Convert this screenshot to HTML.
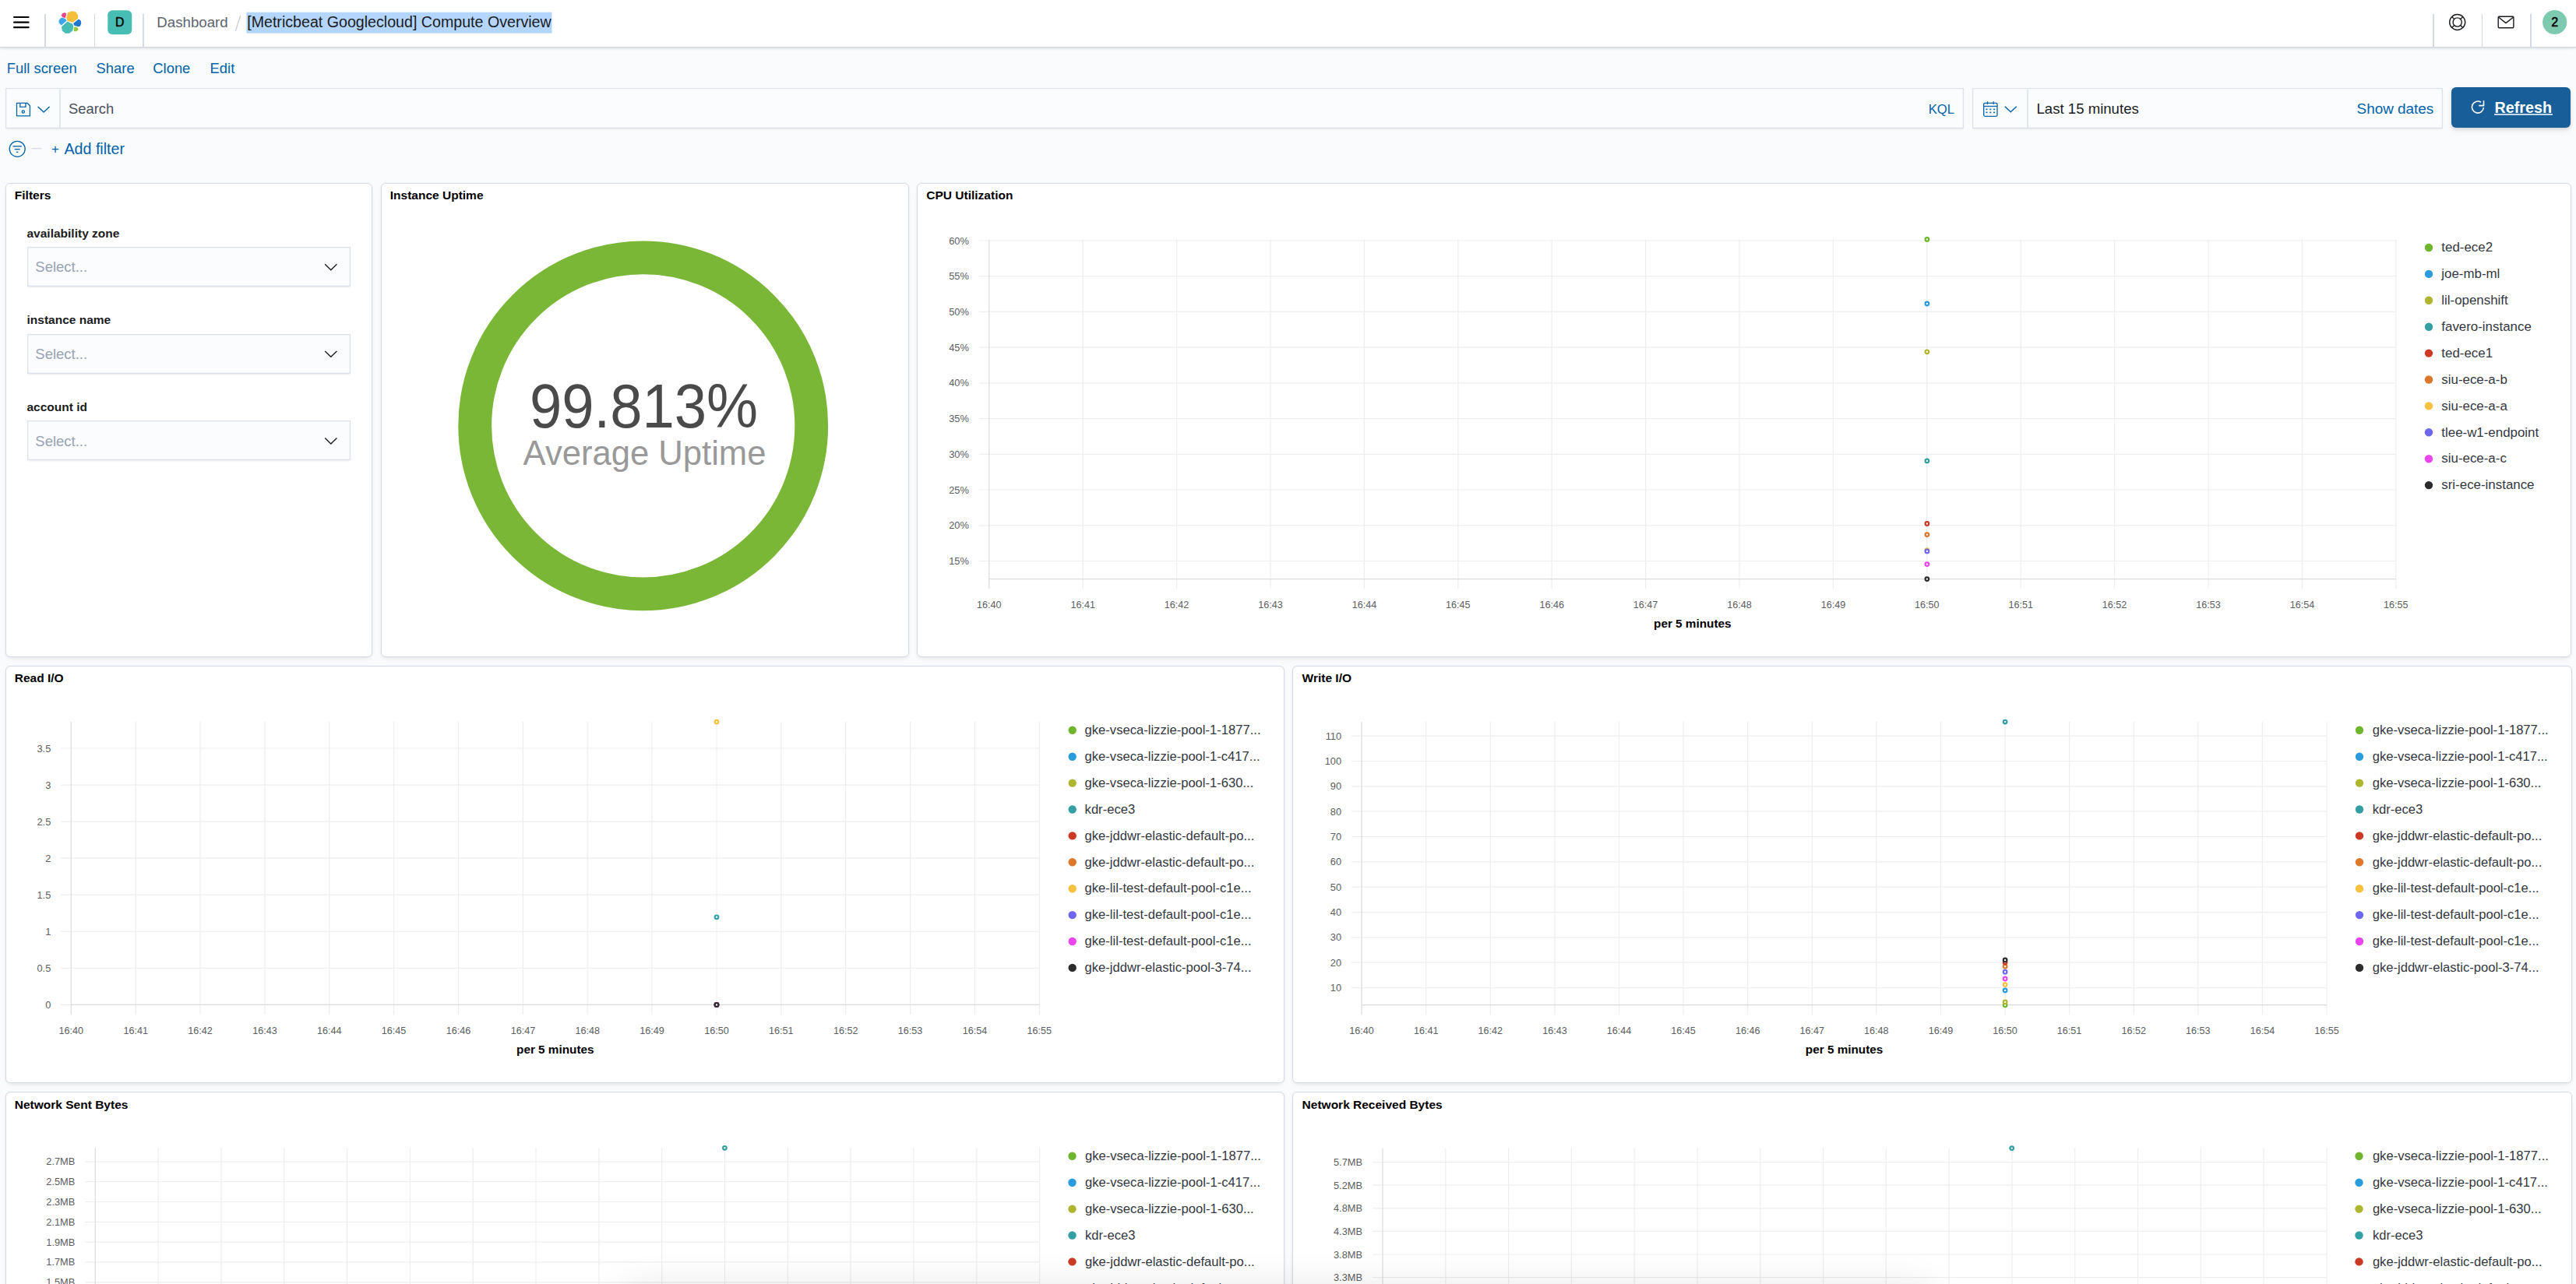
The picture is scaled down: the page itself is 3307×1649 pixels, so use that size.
<!DOCTYPE html>
<html><head><meta charset="utf-8"><title>[Metricbeat Googlecloud] Compute Overview - Kibana</title>
<style>
html,body{margin:0;padding:0;}
body{width:3307px;height:1649px;overflow:hidden;position:relative;background:#FAFBFD;font-family:"Liberation Sans", sans-serif;}
svg text{font-family:"Liberation Sans", sans-serif;}
</style></head><body>
<div style="position:absolute;left:0px;top:0px;width:3307px;height:60px;background:#fff;border-bottom:1px solid #D3DAE6;box-shadow:0 0.5px 0 rgba(200,208,222,.6),0 1.5px 3px rgba(0,0,0,.07),0 3px 6px -2px rgba(0,0,0,.04);"></div><div style="position:absolute;left:57.25px;top:18px;width:1.5px;height:42px;background:#D3DAE6;"></div><div style="position:absolute;left:120.75px;top:18px;width:1.5px;height:42px;background:#D3DAE6;"></div><div style="position:absolute;left:183.25px;top:18px;width:1.5px;height:42px;background:#D3DAE6;"></div><div style="position:absolute;left:3123.25px;top:18px;width:1.5px;height:42px;background:#D3DAE6;"></div><div style="position:absolute;left:3185.75px;top:18px;width:1.5px;height:42px;background:#D3DAE6;"></div><div style="position:absolute;left:3248.25px;top:18px;width:1.5px;height:42px;background:#D3DAE6;"></div><div style="position:absolute;left:7px;top:113px;width:2514px;height:52px;background:#FBFCFD;box-shadow:0 1px 2px -0.5px rgba(0,0,0,.06),0 3px 3px -2px rgba(0,0,0,.04),inset 0 0 0 1.3px #DCE1EA;"></div><div style="position:absolute;left:76.3px;top:114.5px;width:1.5px;height:49.19999999999999px;background:#E2E6ED;"></div><div style="position:absolute;left:2532px;top:113px;width:604px;height:52px;background:#FBFCFD;box-shadow:0 1px 2px -0.5px rgba(0,0,0,.06),0 3px 3px -2px rgba(0,0,0,.04),inset 0 0 0 1.3px #DCE1EA;"></div><div style="position:absolute;left:2602px;top:114.5px;width:1.5px;height:49.19999999999999px;background:#E2E6ED;"></div><div style="position:absolute;left:3147.2px;top:112.2px;width:152.80000000000018px;height:51.8px;background:#185F9A;border-radius:6px;box-shadow:0 2px 4px rgba(0,0,0,.12),0 4px 10px rgba(0,0,0,.06);"></div><div style="position:absolute;left:6.5px;top:234.5px;width:471.5px;height:609.3px;background:#fff;border:1px solid #D3DAE6;border-radius:6px;box-sizing:border-box;box-shadow:0 1px 4px -1px rgba(0,0,0,.07),0 3px 7px -2px rgba(0,0,0,.04),0 7px 12px -4px rgba(0,0,0,.03);"></div><div style="position:absolute;left:488.5px;top:234.5px;width:678.5px;height:609.3px;background:#fff;border:1px solid #D3DAE6;border-radius:6px;box-sizing:border-box;box-shadow:0 1px 4px -1px rgba(0,0,0,.07),0 3px 7px -2px rgba(0,0,0,.04),0 7px 12px -4px rgba(0,0,0,.03);"></div><div style="position:absolute;left:1177px;top:234.5px;width:2123.5px;height:609.3px;background:#fff;border:1px solid #D3DAE6;border-radius:6px;box-sizing:border-box;box-shadow:0 1px 4px -1px rgba(0,0,0,.07),0 3px 7px -2px rgba(0,0,0,.04),0 7px 12px -4px rgba(0,0,0,.03);"></div><div style="position:absolute;left:6.5px;top:854.7px;width:1642.5px;height:536.3px;background:#fff;border:1px solid #D3DAE6;border-radius:6px;box-sizing:border-box;box-shadow:0 1px 4px -1px rgba(0,0,0,.07),0 3px 7px -2px rgba(0,0,0,.04),0 7px 12px -4px rgba(0,0,0,.03);"></div><div style="position:absolute;left:1659.3px;top:854.7px;width:1642.3999999999999px;height:536.3px;background:#fff;border:1px solid #D3DAE6;border-radius:6px;box-sizing:border-box;box-shadow:0 1px 4px -1px rgba(0,0,0,.07),0 3px 7px -2px rgba(0,0,0,.04),0 7px 12px -4px rgba(0,0,0,.03);"></div><div style="position:absolute;left:6.5px;top:1402px;width:1642.5px;height:298px;background:#fff;border:1px solid #D3DAE6;border-radius:6px;box-sizing:border-box;box-shadow:0 1px 4px -1px rgba(0,0,0,.07),0 3px 7px -2px rgba(0,0,0,.04),0 7px 12px -4px rgba(0,0,0,.03);"></div><div style="position:absolute;left:1659.3px;top:1402px;width:1642.3999999999999px;height:298px;background:#fff;border:1px solid #D3DAE6;border-radius:6px;box-sizing:border-box;box-shadow:0 1px 4px -1px rgba(0,0,0,.07),0 3px 7px -2px rgba(0,0,0,.04),0 7px 12px -4px rgba(0,0,0,.03);"></div><div style="position:absolute;left:34.5px;top:317.2px;width:415.2px;height:51.0px;background:#FBFCFD;box-shadow:0 1px 2px -0.5px rgba(0,0,0,.06),0 3px 3px -2px rgba(0,0,0,.04),inset 0 0 0 1.3px #DCE1EA;"></div><div style="position:absolute;left:34.5px;top:428.79999999999995px;width:415.2px;height:51.0px;background:#FBFCFD;box-shadow:0 1px 2px -0.5px rgba(0,0,0,.06),0 3px 3px -2px rgba(0,0,0,.04),inset 0 0 0 1.3px #DCE1EA;"></div><div style="position:absolute;left:34.5px;top:540.4px;width:415.2px;height:51.0px;background:#FBFCFD;box-shadow:0 1px 2px -0.5px rgba(0,0,0,.06),0 3px 3px -2px rgba(0,0,0,.04),inset 0 0 0 1.3px #DCE1EA;"></div>
<svg width="3307" height="1649" viewBox="0 0 3307 1649" style="position:absolute;left:0;top:0;">
<rect x="17" y="20.9" width="20.6" height="2.2" rx="1" fill="#000"/><rect x="17" y="27.599999999999998" width="20.6" height="2.2" rx="1" fill="#000"/><rect x="17" y="34.1" width="20.6" height="2.2" rx="1" fill="#000"/><g stroke-linejoin="round" stroke-width="1.1">
<polygon points="79.41,19.76 80.50,17.63 83.02,16.86 84.64,17.63 84.20,19.91 83.46,22.43 80.80,21.83" fill="#E8488B" stroke="#E8488B"/>
<polygon points="86.12,21.24 87.60,16.66 92.19,14.67 96.63,15.47 99.59,19.47 99.59,23.31 93.37,28.34 87.01,26.42 85.83,23.31" fill="#F5BF3B" stroke="#F5BF3B"/>
<polygon points="76.07,26.57 77.84,24.05 79.76,23.37 83.76,24.64 84.79,26.57 78.73,31.89 76.21,29.23" fill="#3EA5EE" stroke="#3EA5EE"/>
<polygon points="79.76,34.26 86.57,28.34 92.93,31.15 93.67,34.26 92.84,38.85 88.93,42.25 84.20,42.25 80.21,39.14" fill="#47BDB3" stroke="#47BDB3"/>
<polygon points="94.85,30.12 101.01,25.24 103.28,27.01 103.73,30.12 102.40,33.22 100.47,33.67 95.59,32.13" fill="#1F77CF" stroke="#1F77CF"/>
<polygon points="95.38,35.38 97.22,35.09 99.59,36.18 99.88,38.05 98.25,39.59 95.38,39.59" fill="#93C83E" stroke="#93C83E"/>
</g><rect x="138.3" y="13.3" width="31" height="31" rx="6" fill="#48BDB3"/><text x="153.8" y="33.9" font-size="15.8" fill="#000" font-weight="400" text-anchor="middle" stroke="#000" stroke-width="0.45">D</text><text x="201.3" y="35.4" font-size="18.7" fill="#5E646F" font-weight="400" text-anchor="start" >Dashboard</text><line x1="308.6" y1="20.2" x2="302.4" y2="39.8" stroke="#C8CED8" stroke-width="1.3" /><rect x="316.5" y="15.7" width="392" height="27" fill="#B4D5FE"/><text x="317.2" y="35.4" font-size="19.6" fill="#1A1C21" font-weight="400" text-anchor="start" textLength="390.5" lengthAdjust="spacingAndGlyphs">[Metricbeat Googlecloud] Compute Overview</text><g fill="none" stroke="#1A1C21" stroke-width="1.4">
<circle cx="3154.7" cy="28.5" r="10"/><circle cx="3154.7" cy="28.5" r="5.6"/>
<line x1="3147.6" y1="21.4" x2="3150.7" y2="24.5"/><line x1="3161.8" y1="21.4" x2="3158.7" y2="24.5"/>
<line x1="3147.6" y1="35.6" x2="3150.7" y2="32.5"/><line x1="3161.8" y1="35.6" x2="3158.7" y2="32.5"/>
</g><g fill="none" stroke="#1A1C21" stroke-width="1.4" stroke-linejoin="round">
<rect x="3207.2" y="21.3" width="19.7" height="14.4" rx="1.2"/>
<path d="M3207.8 22.2 L3217 29.6 L3226.3 22.2"/>
</g><circle cx="3279.7" cy="28.5" r="15.6" fill="#7DCAB0"/><text x="3279.7" y="34.2" font-size="16" fill="#000" font-weight="400" text-anchor="middle" stroke="#000" stroke-width="0.5">2</text><text x="8.7" y="93.5" font-size="18.4" fill="#0062A8" font-weight="400" text-anchor="start" >Full screen</text><text x="123.6" y="93.5" font-size="18.4" fill="#0062A8" font-weight="400" text-anchor="start" >Share</text><text x="196.3" y="93.5" font-size="18.4" fill="#0062A8" font-weight="400" text-anchor="start" >Clone</text><text x="269.6" y="93.5" font-size="18.4" fill="#0062A8" font-weight="400" text-anchor="start" >Edit</text><g fill="none" stroke="#0062A8" stroke-width="1.3" stroke-linejoin="round">
<path d="M21.5 132.3 H35 L38.4 135.7 V148.8 H21.5 Z"/>
<path d="M25.8 132.3 V137.3 H33 V132.3"/>
<circle cx="29.8" cy="143.5" r="1.6"/>
</g><path d="M48.6 137.1 L56.1 144.1 L63.6 137.1" fill="none" stroke="#0062A8" stroke-width="1.4"/><text x="88" y="145.7" font-size="18.4" fill="#4A505C" font-weight="400" text-anchor="start" >Search</text><text x="2509" y="146" font-size="16.6" fill="#0062A8" font-weight="400" text-anchor="end" >KQL</text><g fill="none" stroke="#0062A8" stroke-width="1.3">
<rect x="2546.7" y="132.3" width="17.3" height="17" rx="1.5"/>
<line x1="2546.7" y1="136.5" x2="2564" y2="136.5"/>
<line x1="2551.5" y1="130.3" x2="2551.5" y2="134"/><line x1="2559.2" y1="130.3" x2="2559.2" y2="134"/>
</g>
<g fill="#0062A8">
<rect x="2549.5" y="139.6" width="2" height="1.6"/><rect x="2554.3" y="139.6" width="2" height="1.6"/><rect x="2559.1" y="139.6" width="2" height="1.6"/>
<rect x="2549.5" y="143.6" width="2" height="1.6"/><rect x="2554.3" y="143.6" width="2" height="1.6"/><rect x="2559.1" y="143.6" width="2" height="1.6"/>
</g><path d="M2573.8 136.8 L2581.3 143.8 L2588.8 136.8" fill="none" stroke="#0062A8" stroke-width="1.4"/><text x="2614.5" y="146" font-size="18.6" fill="#1A1C21" font-weight="400" text-anchor="start" >Last 15 minutes</text><text x="3124.3" y="146" font-size="18.9" fill="#0062A8" font-weight="400" text-anchor="end" >Show dates</text><g fill="none" stroke="#fff" stroke-width="1.6">
<path d="M3184.9 131.2 A7.5 7.5 0 1 0 3188.4 138"/>
<path d="M3188.5 129.2 V135.6 H3182.3"/>
</g><text x="3202.5" y="144.8" font-size="21" fill="#fff" font-weight="700" text-anchor="start" textLength="73.5" lengthAdjust="spacingAndGlyphs">Refresh</text><line x1="3202" y1="147" x2="3277" y2="147" stroke="#fff" stroke-width="1.7" /><g fill="none" stroke="#0062A8" stroke-width="1.3">
<circle cx="22.2" cy="191.3" r="10"/>
<line x1="16.5" y1="187.9" x2="27.9" y2="187.9"/>
<line x1="18.7" y1="191.7" x2="25.7" y2="191.7"/>
<line x1="21" y1="195.4" x2="23.4" y2="195.4"/>
</g><line x1="40.4" y1="190.7" x2="53.4" y2="190.7" stroke="#D3DAE6" stroke-width="1.3" /><text x="70.9" y="197" font-size="17" fill="#0062A8" font-weight="400" text-anchor="middle" >+</text><text x="82.5" y="198" font-size="19.4" fill="#0062A8" font-weight="400" text-anchor="start" textLength="77.5" lengthAdjust="spacingAndGlyphs">Add filter</text><text x="18.8" y="256.0" font-size="15.5" fill="#000" font-weight="700" text-anchor="start" >Filters</text><text x="500.8" y="256.0" font-size="15.5" fill="#000" font-weight="700" text-anchor="start" >Instance Uptime</text><text x="1189.3" y="256.0" font-size="15.5" fill="#000" font-weight="700" text-anchor="start" >CPU Utilization</text><text x="18.8" y="876.2" font-size="15.5" fill="#000" font-weight="700" text-anchor="start" >Read I/O</text><text x="1671.6" y="876.2" font-size="15.5" fill="#000" font-weight="700" text-anchor="start" >Write I/O</text><text x="18.8" y="1423.5" font-size="15.5" fill="#000" font-weight="700" text-anchor="start" >Network Sent Bytes</text><text x="1671.6" y="1423.5" font-size="15.5" fill="#000" font-weight="700" text-anchor="start" >Network Received Bytes</text><text x="34.5" y="304.8" font-size="15.5" fill="#1A1C21" font-weight="700" text-anchor="start" >availability zone</text><text x="45.3" y="349.3" font-size="18.5" fill="#98A2B3" font-weight="400" text-anchor="start" >Select...</text><path d="M417.2 339.3 L424.8 346.7 L432.4 339.3" fill="none" stroke="#1A1C21" stroke-width="1.4"/><text x="34.5" y="416.4" font-size="15.5" fill="#1A1C21" font-weight="700" text-anchor="start" >instance name</text><text x="45.3" y="460.9" font-size="18.5" fill="#98A2B3" font-weight="400" text-anchor="start" >Select...</text><path d="M417.2 450.9 L424.8 458.29999999999995 L432.4 450.9" fill="none" stroke="#1A1C21" stroke-width="1.4"/><text x="34.5" y="528.0" font-size="15.5" fill="#1A1C21" font-weight="700" text-anchor="start" >account id</text><text x="45.3" y="572.5" font-size="18.5" fill="#98A2B3" font-weight="400" text-anchor="start" >Select...</text><path d="M417.2 562.5 L424.8 569.9 L432.4 562.5" fill="none" stroke="#1A1C21" stroke-width="1.4"/><circle cx="825.7" cy="546.8" r="216" fill="none" stroke="#7AB736" stroke-width="42.8"/><text x="826.5" y="548.8" font-size="80" fill="#4A4A4A" font-weight="400" text-anchor="middle" textLength="293" lengthAdjust="spacingAndGlyphs">99.813%</text><text x="827.5" y="597.2" font-size="43.6" fill="#999999" font-weight="400" text-anchor="middle" >Average Uptime</text><line x1="1256.8" y1="309.0" x2="3075.8" y2="309.0" stroke="#EEEEEE" stroke-width="1.2"/><line x1="1256.8" y1="354.7" x2="3075.8" y2="354.7" stroke="#EEEEEE" stroke-width="1.2"/><line x1="1256.8" y1="400.4" x2="3075.8" y2="400.4" stroke="#EEEEEE" stroke-width="1.2"/><line x1="1256.8" y1="446.2" x2="3075.8" y2="446.2" stroke="#EEEEEE" stroke-width="1.2"/><line x1="1256.8" y1="491.9" x2="3075.8" y2="491.9" stroke="#EEEEEE" stroke-width="1.2"/><line x1="1256.8" y1="537.6" x2="3075.8" y2="537.6" stroke="#EEEEEE" stroke-width="1.2"/><line x1="1256.8" y1="583.3" x2="3075.8" y2="583.3" stroke="#EEEEEE" stroke-width="1.2"/><line x1="1256.8" y1="629.0" x2="3075.8" y2="629.0" stroke="#EEEEEE" stroke-width="1.2"/><line x1="1256.8" y1="674.8" x2="3075.8" y2="674.8" stroke="#EEEEEE" stroke-width="1.2"/><line x1="1256.8" y1="720.5" x2="3075.8" y2="720.5" stroke="#EEEEEE" stroke-width="1.2"/><line x1="1269.8" y1="307.6" x2="1269.8" y2="756.3" stroke="#DCDCDC" stroke-width="1.2"/><line x1="1390.2" y1="307.6" x2="1390.2" y2="756.3" stroke="#EEEEEE" stroke-width="1.2"/><line x1="1510.6" y1="307.6" x2="1510.6" y2="756.3" stroke="#EEEEEE" stroke-width="1.2"/><line x1="1631.0" y1="307.6" x2="1631.0" y2="756.3" stroke="#EEEEEE" stroke-width="1.2"/><line x1="1751.4" y1="307.6" x2="1751.4" y2="756.3" stroke="#EEEEEE" stroke-width="1.2"/><line x1="1871.8" y1="307.6" x2="1871.8" y2="756.3" stroke="#EEEEEE" stroke-width="1.2"/><line x1="1992.2" y1="307.6" x2="1992.2" y2="756.3" stroke="#EEEEEE" stroke-width="1.2"/><line x1="2112.6" y1="307.6" x2="2112.6" y2="756.3" stroke="#EEEEEE" stroke-width="1.2"/><line x1="2233.0" y1="307.6" x2="2233.0" y2="756.3" stroke="#EEEEEE" stroke-width="1.2"/><line x1="2353.4" y1="307.6" x2="2353.4" y2="756.3" stroke="#EEEEEE" stroke-width="1.2"/><line x1="2473.8" y1="307.6" x2="2473.8" y2="756.3" stroke="#EEEEEE" stroke-width="1.2"/><line x1="2594.2" y1="307.6" x2="2594.2" y2="756.3" stroke="#EEEEEE" stroke-width="1.2"/><line x1="2714.6" y1="307.6" x2="2714.6" y2="756.3" stroke="#EEEEEE" stroke-width="1.2"/><line x1="2835.0" y1="307.6" x2="2835.0" y2="756.3" stroke="#EEEEEE" stroke-width="1.2"/><line x1="2955.4" y1="307.6" x2="2955.4" y2="756.3" stroke="#EEEEEE" stroke-width="1.2"/><line x1="3075.8" y1="307.6" x2="3075.8" y2="756.3" stroke="#EEEEEE" stroke-width="1.2"/><line x1="1269.8" y1="743.6" x2="3075.8" y2="743.6" stroke="#DCDCDC" stroke-width="1.3"/><text x="1243.8" y="313.5" font-size="12.8" fill="#5C5D62" font-weight="400" text-anchor="end" >60%</text><text x="1243.8" y="359.2" font-size="12.8" fill="#5C5D62" font-weight="400" text-anchor="end" >55%</text><text x="1243.8" y="404.9" font-size="12.8" fill="#5C5D62" font-weight="400" text-anchor="end" >50%</text><text x="1243.8" y="450.7" font-size="12.8" fill="#5C5D62" font-weight="400" text-anchor="end" >45%</text><text x="1243.8" y="496.4" font-size="12.8" fill="#5C5D62" font-weight="400" text-anchor="end" >40%</text><text x="1243.8" y="542.1" font-size="12.8" fill="#5C5D62" font-weight="400" text-anchor="end" >35%</text><text x="1243.8" y="587.8" font-size="12.8" fill="#5C5D62" font-weight="400" text-anchor="end" >30%</text><text x="1243.8" y="633.5" font-size="12.8" fill="#5C5D62" font-weight="400" text-anchor="end" >25%</text><text x="1243.8" y="679.3" font-size="12.8" fill="#5C5D62" font-weight="400" text-anchor="end" >20%</text><text x="1243.8" y="725.0" font-size="12.8" fill="#5C5D62" font-weight="400" text-anchor="end" >15%</text><text x="1269.8" y="780.8" font-size="12.6" fill="#5C5D62" font-weight="400" text-anchor="middle" >16:40</text><text x="1390.2" y="780.8" font-size="12.6" fill="#5C5D62" font-weight="400" text-anchor="middle" >16:41</text><text x="1510.6" y="780.8" font-size="12.6" fill="#5C5D62" font-weight="400" text-anchor="middle" >16:42</text><text x="1631.0" y="780.8" font-size="12.6" fill="#5C5D62" font-weight="400" text-anchor="middle" >16:43</text><text x="1751.4" y="780.8" font-size="12.6" fill="#5C5D62" font-weight="400" text-anchor="middle" >16:44</text><text x="1871.8" y="780.8" font-size="12.6" fill="#5C5D62" font-weight="400" text-anchor="middle" >16:45</text><text x="1992.2" y="780.8" font-size="12.6" fill="#5C5D62" font-weight="400" text-anchor="middle" >16:46</text><text x="2112.6" y="780.8" font-size="12.6" fill="#5C5D62" font-weight="400" text-anchor="middle" >16:47</text><text x="2233.0" y="780.8" font-size="12.6" fill="#5C5D62" font-weight="400" text-anchor="middle" >16:48</text><text x="2353.4" y="780.8" font-size="12.6" fill="#5C5D62" font-weight="400" text-anchor="middle" >16:49</text><text x="2473.8" y="780.8" font-size="12.6" fill="#5C5D62" font-weight="400" text-anchor="middle" >16:50</text><text x="2594.2" y="780.8" font-size="12.6" fill="#5C5D62" font-weight="400" text-anchor="middle" >16:51</text><text x="2714.6" y="780.8" font-size="12.6" fill="#5C5D62" font-weight="400" text-anchor="middle" >16:52</text><text x="2835.0" y="780.8" font-size="12.6" fill="#5C5D62" font-weight="400" text-anchor="middle" >16:53</text><text x="2955.4" y="780.8" font-size="12.6" fill="#5C5D62" font-weight="400" text-anchor="middle" >16:54</text><text x="3075.8" y="780.8" font-size="12.6" fill="#5C5D62" font-weight="400" text-anchor="middle" >16:55</text><text x="2172.8" y="806.1" font-size="15.3" fill="#000" font-weight="700" text-anchor="middle" >per 5 minutes</text><circle cx="2473.9" cy="307.4" r="2.3" fill="#fff" stroke="#6FB62E" stroke-width="2.2"/><circle cx="2473.9" cy="390.0" r="2.3" fill="#fff" stroke="#2A9CDD" stroke-width="2.2"/><circle cx="2473.9" cy="451.8" r="2.3" fill="#fff" stroke="#ADB62E" stroke-width="2.2"/><circle cx="2473.9" cy="591.9" r="2.3" fill="#fff" stroke="#339FA2" stroke-width="2.2"/><circle cx="2473.9" cy="672.5" r="2.3" fill="#fff" stroke="#CC3A26" stroke-width="2.2"/><circle cx="2473.9" cy="686.6" r="2.3" fill="#fff" stroke="#DD772A" stroke-width="2.2"/><circle cx="2473.9" cy="706.6" r="2.3" fill="#fff" stroke="#F7C23F" stroke-width="2.2"/><circle cx="2473.9" cy="707.9" r="2.3" fill="#fff" stroke="#6E66F0" stroke-width="2.2"/><circle cx="2473.9" cy="724.6" r="2.3" fill="#fff" stroke="#EB45EE" stroke-width="2.2"/><circle cx="2473.9" cy="743.6" r="2.3" fill="#fff" stroke="#2B2B2B" stroke-width="2.2"/><circle cx="3118.0" cy="318.0" r="5.2" fill="#6FB62E"/><text x="3134.3" y="323.2" font-size="16.9" fill="#343741" font-weight="400" text-anchor="start" >ted-ece2</text><circle cx="3118.0" cy="351.9" r="5.2" fill="#2A9CDD"/><text x="3134.3" y="357.1" font-size="16.9" fill="#343741" font-weight="400" text-anchor="start" >joe-mb-ml</text><circle cx="3118.0" cy="385.8" r="5.2" fill="#ADB62E"/><text x="3134.3" y="391.0" font-size="16.9" fill="#343741" font-weight="400" text-anchor="start" >lil-openshift</text><circle cx="3118.0" cy="419.7" r="5.2" fill="#339FA2"/><text x="3134.3" y="424.9" font-size="16.9" fill="#343741" font-weight="400" text-anchor="start" >favero-instance</text><circle cx="3118.0" cy="453.6" r="5.2" fill="#CC3A26"/><text x="3134.3" y="458.8" font-size="16.9" fill="#343741" font-weight="400" text-anchor="start" >ted-ece1</text><circle cx="3118.0" cy="487.5" r="5.2" fill="#DD772A"/><text x="3134.3" y="492.7" font-size="16.9" fill="#343741" font-weight="400" text-anchor="start" >siu-ece-a-b</text><circle cx="3118.0" cy="521.4" r="5.2" fill="#F7C23F"/><text x="3134.3" y="526.6" font-size="16.9" fill="#343741" font-weight="400" text-anchor="start" >siu-ece-a-a</text><circle cx="3118.0" cy="555.3" r="5.2" fill="#6E66F0"/><text x="3134.3" y="560.5" font-size="16.9" fill="#343741" font-weight="400" text-anchor="start" >tlee-w1-endpoint</text><circle cx="3118.0" cy="589.2" r="5.2" fill="#EB45EE"/><text x="3134.3" y="594.4" font-size="16.9" fill="#343741" font-weight="400" text-anchor="start" >siu-ece-a-c</text><circle cx="3118.0" cy="623.1" r="5.2" fill="#2B2B2B"/><text x="3134.3" y="628.3" font-size="16.9" fill="#343741" font-weight="400" text-anchor="start" >sri-ece-instance</text><line x1="78.3" y1="961.0" x2="1334.3" y2="961.0" stroke="#EEEEEE" stroke-width="1.2"/><line x1="78.3" y1="1008.1" x2="1334.3" y2="1008.1" stroke="#EEEEEE" stroke-width="1.2"/><line x1="78.3" y1="1055.1" x2="1334.3" y2="1055.1" stroke="#EEEEEE" stroke-width="1.2"/><line x1="78.3" y1="1102.2" x2="1334.3" y2="1102.2" stroke="#EEEEEE" stroke-width="1.2"/><line x1="78.3" y1="1149.2" x2="1334.3" y2="1149.2" stroke="#EEEEEE" stroke-width="1.2"/><line x1="78.3" y1="1196.3" x2="1334.3" y2="1196.3" stroke="#EEEEEE" stroke-width="1.2"/><line x1="78.3" y1="1243.4" x2="1334.3" y2="1243.4" stroke="#EEEEEE" stroke-width="1.2"/><line x1="78.3" y1="1290.4" x2="1334.3" y2="1290.4" stroke="#EEEEEE" stroke-width="1.2"/><line x1="91.3" y1="927.1" x2="91.3" y2="1303.1" stroke="#DCDCDC" stroke-width="1.2"/><line x1="174.2" y1="927.1" x2="174.2" y2="1303.1" stroke="#EEEEEE" stroke-width="1.2"/><line x1="257.0" y1="927.1" x2="257.0" y2="1303.1" stroke="#EEEEEE" stroke-width="1.2"/><line x1="339.9" y1="927.1" x2="339.9" y2="1303.1" stroke="#EEEEEE" stroke-width="1.2"/><line x1="422.8" y1="927.1" x2="422.8" y2="1303.1" stroke="#EEEEEE" stroke-width="1.2"/><line x1="505.6" y1="927.1" x2="505.6" y2="1303.1" stroke="#EEEEEE" stroke-width="1.2"/><line x1="588.5" y1="927.1" x2="588.5" y2="1303.1" stroke="#EEEEEE" stroke-width="1.2"/><line x1="671.4" y1="927.1" x2="671.4" y2="1303.1" stroke="#EEEEEE" stroke-width="1.2"/><line x1="754.2" y1="927.1" x2="754.2" y2="1303.1" stroke="#EEEEEE" stroke-width="1.2"/><line x1="837.1" y1="927.1" x2="837.1" y2="1303.1" stroke="#EEEEEE" stroke-width="1.2"/><line x1="920.0" y1="927.1" x2="920.0" y2="1303.1" stroke="#EEEEEE" stroke-width="1.2"/><line x1="1002.8" y1="927.1" x2="1002.8" y2="1303.1" stroke="#EEEEEE" stroke-width="1.2"/><line x1="1085.7" y1="927.1" x2="1085.7" y2="1303.1" stroke="#EEEEEE" stroke-width="1.2"/><line x1="1168.6" y1="927.1" x2="1168.6" y2="1303.1" stroke="#EEEEEE" stroke-width="1.2"/><line x1="1251.4" y1="927.1" x2="1251.4" y2="1303.1" stroke="#EEEEEE" stroke-width="1.2"/><line x1="1334.3" y1="927.1" x2="1334.3" y2="1303.1" stroke="#EEEEEE" stroke-width="1.2"/><line x1="91.3" y1="1290.4" x2="1334.3" y2="1290.4" stroke="#DCDCDC" stroke-width="1.3"/><text x="65.3" y="965.5" font-size="12.8" fill="#5C5D62" font-weight="400" text-anchor="end" >3.5</text><text x="65.3" y="1012.6" font-size="12.8" fill="#5C5D62" font-weight="400" text-anchor="end" >3</text><text x="65.3" y="1059.6" font-size="12.8" fill="#5C5D62" font-weight="400" text-anchor="end" >2.5</text><text x="65.3" y="1106.7" font-size="12.8" fill="#5C5D62" font-weight="400" text-anchor="end" >2</text><text x="65.3" y="1153.7" font-size="12.8" fill="#5C5D62" font-weight="400" text-anchor="end" >1.5</text><text x="65.3" y="1200.8" font-size="12.8" fill="#5C5D62" font-weight="400" text-anchor="end" >1</text><text x="65.3" y="1247.9" font-size="12.8" fill="#5C5D62" font-weight="400" text-anchor="end" >0.5</text><text x="65.3" y="1294.9" font-size="12.8" fill="#5C5D62" font-weight="400" text-anchor="end" >0</text><text x="91.3" y="1327.6" font-size="12.6" fill="#5C5D62" font-weight="400" text-anchor="middle" >16:40</text><text x="174.2" y="1327.6" font-size="12.6" fill="#5C5D62" font-weight="400" text-anchor="middle" >16:41</text><text x="257.0" y="1327.6" font-size="12.6" fill="#5C5D62" font-weight="400" text-anchor="middle" >16:42</text><text x="339.9" y="1327.6" font-size="12.6" fill="#5C5D62" font-weight="400" text-anchor="middle" >16:43</text><text x="422.8" y="1327.6" font-size="12.6" fill="#5C5D62" font-weight="400" text-anchor="middle" >16:44</text><text x="505.6" y="1327.6" font-size="12.6" fill="#5C5D62" font-weight="400" text-anchor="middle" >16:45</text><text x="588.5" y="1327.6" font-size="12.6" fill="#5C5D62" font-weight="400" text-anchor="middle" >16:46</text><text x="671.4" y="1327.6" font-size="12.6" fill="#5C5D62" font-weight="400" text-anchor="middle" >16:47</text><text x="754.2" y="1327.6" font-size="12.6" fill="#5C5D62" font-weight="400" text-anchor="middle" >16:48</text><text x="837.1" y="1327.6" font-size="12.6" fill="#5C5D62" font-weight="400" text-anchor="middle" >16:49</text><text x="920.0" y="1327.6" font-size="12.6" fill="#5C5D62" font-weight="400" text-anchor="middle" >16:50</text><text x="1002.8" y="1327.6" font-size="12.6" fill="#5C5D62" font-weight="400" text-anchor="middle" >16:51</text><text x="1085.7" y="1327.6" font-size="12.6" fill="#5C5D62" font-weight="400" text-anchor="middle" >16:52</text><text x="1168.6" y="1327.6" font-size="12.6" fill="#5C5D62" font-weight="400" text-anchor="middle" >16:53</text><text x="1251.4" y="1327.6" font-size="12.6" fill="#5C5D62" font-weight="400" text-anchor="middle" >16:54</text><text x="1334.3" y="1327.6" font-size="12.6" fill="#5C5D62" font-weight="400" text-anchor="middle" >16:55</text><text x="712.8" y="1352.9" font-size="15.3" fill="#000" font-weight="700" text-anchor="middle" >per 5 minutes</text><circle cx="920.0" cy="1290.4" r="2.3" fill="#fff" stroke="#6FB62E" stroke-width="2.2"/><circle cx="920.0" cy="1290.4" r="2.3" fill="#fff" stroke="#2A9CDD" stroke-width="2.2"/><circle cx="920.0" cy="1290.4" r="2.3" fill="#fff" stroke="#ADB62E" stroke-width="2.2"/><circle cx="920.0" cy="1290.4" r="2.3" fill="#fff" stroke="#CC3A26" stroke-width="2.2"/><circle cx="920.0" cy="1290.4" r="2.3" fill="#fff" stroke="#DD772A" stroke-width="2.2"/><circle cx="920.0" cy="1290.4" r="2.3" fill="#fff" stroke="#6E66F0" stroke-width="2.2"/><circle cx="920.0" cy="1290.4" r="2.3" fill="#fff" stroke="#EB45EE" stroke-width="2.2"/><circle cx="920.0" cy="1290.4" r="2.3" fill="#fff" stroke="#2B2B2B" stroke-width="2.2"/><circle cx="920.0" cy="1177.8" r="2.3" fill="#fff" stroke="#339FA2" stroke-width="2.2"/><circle cx="920.0" cy="927.1" r="2.3" fill="#fff" stroke="#F7C23F" stroke-width="2.2"/><circle cx="1376.7" cy="937.8" r="5.2" fill="#6FB62E"/><text x="1392.6" y="943.0" font-size="16.6" fill="#343741" font-weight="400" text-anchor="start" >gke-vseca-lizzie-pool-1-1877...</text><circle cx="1376.7" cy="971.7" r="5.2" fill="#2A9CDD"/><text x="1392.6" y="976.9" font-size="16.6" fill="#343741" font-weight="400" text-anchor="start" >gke-vseca-lizzie-pool-1-c417...</text><circle cx="1376.7" cy="1005.6" r="5.2" fill="#ADB62E"/><text x="1392.6" y="1010.8" font-size="16.6" fill="#343741" font-weight="400" text-anchor="start" >gke-vseca-lizzie-pool-1-630...</text><circle cx="1376.7" cy="1039.5" r="5.2" fill="#339FA2"/><text x="1392.6" y="1044.7" font-size="16.6" fill="#343741" font-weight="400" text-anchor="start" >kdr-ece3</text><circle cx="1376.7" cy="1073.4" r="5.2" fill="#CC3A26"/><text x="1392.6" y="1078.6" font-size="16.6" fill="#343741" font-weight="400" text-anchor="start" >gke-jddwr-elastic-default-po...</text><circle cx="1376.7" cy="1107.3" r="5.2" fill="#DD772A"/><text x="1392.6" y="1112.5" font-size="16.6" fill="#343741" font-weight="400" text-anchor="start" >gke-jddwr-elastic-default-po...</text><circle cx="1376.7" cy="1141.2" r="5.2" fill="#F7C23F"/><text x="1392.6" y="1146.4" font-size="16.6" fill="#343741" font-weight="400" text-anchor="start" >gke-lil-test-default-pool-c1e...</text><circle cx="1376.7" cy="1175.1" r="5.2" fill="#6E66F0"/><text x="1392.6" y="1180.3" font-size="16.6" fill="#343741" font-weight="400" text-anchor="start" >gke-lil-test-default-pool-c1e...</text><circle cx="1376.7" cy="1209.0" r="5.2" fill="#EB45EE"/><text x="1392.6" y="1214.2" font-size="16.6" fill="#343741" font-weight="400" text-anchor="start" >gke-lil-test-default-pool-c1e...</text><circle cx="1376.7" cy="1242.9" r="5.2" fill="#2B2B2B"/><text x="1392.6" y="1248.1" font-size="16.6" fill="#343741" font-weight="400" text-anchor="start" >gke-jddwr-elastic-pool-3-74...</text><line x1="1735.1" y1="945.1" x2="2987.0" y2="945.1" stroke="#EEEEEE" stroke-width="1.2"/><line x1="1735.1" y1="977.5" x2="2987.0" y2="977.5" stroke="#EEEEEE" stroke-width="1.2"/><line x1="1735.1" y1="1009.8" x2="2987.0" y2="1009.8" stroke="#EEEEEE" stroke-width="1.2"/><line x1="1735.1" y1="1042.2" x2="2987.0" y2="1042.2" stroke="#EEEEEE" stroke-width="1.2"/><line x1="1735.1" y1="1074.5" x2="2987.0" y2="1074.5" stroke="#EEEEEE" stroke-width="1.2"/><line x1="1735.1" y1="1106.8" x2="2987.0" y2="1106.8" stroke="#EEEEEE" stroke-width="1.2"/><line x1="1735.1" y1="1139.2" x2="2987.0" y2="1139.2" stroke="#EEEEEE" stroke-width="1.2"/><line x1="1735.1" y1="1171.5" x2="2987.0" y2="1171.5" stroke="#EEEEEE" stroke-width="1.2"/><line x1="1735.1" y1="1203.9" x2="2987.0" y2="1203.9" stroke="#EEEEEE" stroke-width="1.2"/><line x1="1735.1" y1="1236.2" x2="2987.0" y2="1236.2" stroke="#EEEEEE" stroke-width="1.2"/><line x1="1735.1" y1="1268.6" x2="2987.0" y2="1268.6" stroke="#EEEEEE" stroke-width="1.2"/><line x1="1748.1" y1="927.1" x2="1748.1" y2="1303.3" stroke="#DCDCDC" stroke-width="1.2"/><line x1="1830.7" y1="927.1" x2="1830.7" y2="1303.3" stroke="#EEEEEE" stroke-width="1.2"/><line x1="1913.3" y1="927.1" x2="1913.3" y2="1303.3" stroke="#EEEEEE" stroke-width="1.2"/><line x1="1995.9" y1="927.1" x2="1995.9" y2="1303.3" stroke="#EEEEEE" stroke-width="1.2"/><line x1="2078.5" y1="927.1" x2="2078.5" y2="1303.3" stroke="#EEEEEE" stroke-width="1.2"/><line x1="2161.1" y1="927.1" x2="2161.1" y2="1303.3" stroke="#EEEEEE" stroke-width="1.2"/><line x1="2243.7" y1="927.1" x2="2243.7" y2="1303.3" stroke="#EEEEEE" stroke-width="1.2"/><line x1="2326.3" y1="927.1" x2="2326.3" y2="1303.3" stroke="#EEEEEE" stroke-width="1.2"/><line x1="2408.8" y1="927.1" x2="2408.8" y2="1303.3" stroke="#EEEEEE" stroke-width="1.2"/><line x1="2491.4" y1="927.1" x2="2491.4" y2="1303.3" stroke="#EEEEEE" stroke-width="1.2"/><line x1="2574.0" y1="927.1" x2="2574.0" y2="1303.3" stroke="#EEEEEE" stroke-width="1.2"/><line x1="2656.6" y1="927.1" x2="2656.6" y2="1303.3" stroke="#EEEEEE" stroke-width="1.2"/><line x1="2739.2" y1="927.1" x2="2739.2" y2="1303.3" stroke="#EEEEEE" stroke-width="1.2"/><line x1="2821.8" y1="927.1" x2="2821.8" y2="1303.3" stroke="#EEEEEE" stroke-width="1.2"/><line x1="2904.4" y1="927.1" x2="2904.4" y2="1303.3" stroke="#EEEEEE" stroke-width="1.2"/><line x1="2987.0" y1="927.1" x2="2987.0" y2="1303.3" stroke="#EEEEEE" stroke-width="1.2"/><line x1="1748.1" y1="1290.6" x2="2987.0" y2="1290.6" stroke="#DCDCDC" stroke-width="1.3"/><text x="1722.1" y="949.6" font-size="12.8" fill="#5C5D62" font-weight="400" text-anchor="end" >110</text><text x="1722.1" y="982.0" font-size="12.8" fill="#5C5D62" font-weight="400" text-anchor="end" >100</text><text x="1722.1" y="1014.3" font-size="12.8" fill="#5C5D62" font-weight="400" text-anchor="end" >90</text><text x="1722.1" y="1046.7" font-size="12.8" fill="#5C5D62" font-weight="400" text-anchor="end" >80</text><text x="1722.1" y="1079.0" font-size="12.8" fill="#5C5D62" font-weight="400" text-anchor="end" >70</text><text x="1722.1" y="1111.3" font-size="12.8" fill="#5C5D62" font-weight="400" text-anchor="end" >60</text><text x="1722.1" y="1143.7" font-size="12.8" fill="#5C5D62" font-weight="400" text-anchor="end" >50</text><text x="1722.1" y="1176.0" font-size="12.8" fill="#5C5D62" font-weight="400" text-anchor="end" >40</text><text x="1722.1" y="1208.4" font-size="12.8" fill="#5C5D62" font-weight="400" text-anchor="end" >30</text><text x="1722.1" y="1240.8" font-size="12.8" fill="#5C5D62" font-weight="400" text-anchor="end" >20</text><text x="1722.1" y="1273.1" font-size="12.8" fill="#5C5D62" font-weight="400" text-anchor="end" >10</text><text x="1748.1" y="1327.8" font-size="12.6" fill="#5C5D62" font-weight="400" text-anchor="middle" >16:40</text><text x="1830.7" y="1327.8" font-size="12.6" fill="#5C5D62" font-weight="400" text-anchor="middle" >16:41</text><text x="1913.3" y="1327.8" font-size="12.6" fill="#5C5D62" font-weight="400" text-anchor="middle" >16:42</text><text x="1995.9" y="1327.8" font-size="12.6" fill="#5C5D62" font-weight="400" text-anchor="middle" >16:43</text><text x="2078.5" y="1327.8" font-size="12.6" fill="#5C5D62" font-weight="400" text-anchor="middle" >16:44</text><text x="2161.1" y="1327.8" font-size="12.6" fill="#5C5D62" font-weight="400" text-anchor="middle" >16:45</text><text x="2243.7" y="1327.8" font-size="12.6" fill="#5C5D62" font-weight="400" text-anchor="middle" >16:46</text><text x="2326.3" y="1327.8" font-size="12.6" fill="#5C5D62" font-weight="400" text-anchor="middle" >16:47</text><text x="2408.8" y="1327.8" font-size="12.6" fill="#5C5D62" font-weight="400" text-anchor="middle" >16:48</text><text x="2491.4" y="1327.8" font-size="12.6" fill="#5C5D62" font-weight="400" text-anchor="middle" >16:49</text><text x="2574.0" y="1327.8" font-size="12.6" fill="#5C5D62" font-weight="400" text-anchor="middle" >16:50</text><text x="2656.6" y="1327.8" font-size="12.6" fill="#5C5D62" font-weight="400" text-anchor="middle" >16:51</text><text x="2739.2" y="1327.8" font-size="12.6" fill="#5C5D62" font-weight="400" text-anchor="middle" >16:52</text><text x="2821.8" y="1327.8" font-size="12.6" fill="#5C5D62" font-weight="400" text-anchor="middle" >16:53</text><text x="2904.4" y="1327.8" font-size="12.6" fill="#5C5D62" font-weight="400" text-anchor="middle" >16:54</text><text x="2987.0" y="1327.8" font-size="12.6" fill="#5C5D62" font-weight="400" text-anchor="middle" >16:55</text><text x="2367.6" y="1353.1" font-size="15.3" fill="#000" font-weight="700" text-anchor="middle" >per 5 minutes</text><circle cx="2574.1" cy="1290.8" r="2.3" fill="#fff" stroke="#6FB62E" stroke-width="2.2"/><circle cx="2574.1" cy="1286.9" r="2.3" fill="#fff" stroke="#ADB62E" stroke-width="2.2"/><circle cx="2574.1" cy="1271.9" r="2.3" fill="#fff" stroke="#2A9CDD" stroke-width="2.2"/><circle cx="2574.1" cy="1264.6" r="2.3" fill="#fff" stroke="#F7C23F" stroke-width="2.2"/><circle cx="2574.1" cy="1257.0" r="2.3" fill="#fff" stroke="#EB45EE" stroke-width="2.2"/><circle cx="2574.1" cy="1248.2" r="2.3" fill="#fff" stroke="#6E66F0" stroke-width="2.2"/><circle cx="2574.1" cy="1241.2" r="2.3" fill="#fff" stroke="#DD772A" stroke-width="2.2"/><circle cx="2574.1" cy="1235.9" r="2.3" fill="#fff" stroke="#CC3A26" stroke-width="2.2"/><circle cx="2574.1" cy="1233.0" r="2.3" fill="#fff" stroke="#2B2B2B" stroke-width="2.2"/><circle cx="2574.1" cy="927.1" r="2.3" fill="#fff" stroke="#339FA2" stroke-width="2.2"/><circle cx="3029.0" cy="937.8" r="5.2" fill="#6FB62E"/><text x="3045.7" y="943.0" font-size="16.6" fill="#343741" font-weight="400" text-anchor="start" >gke-vseca-lizzie-pool-1-1877...</text><circle cx="3029.0" cy="971.7" r="5.2" fill="#2A9CDD"/><text x="3045.7" y="976.9" font-size="16.6" fill="#343741" font-weight="400" text-anchor="start" >gke-vseca-lizzie-pool-1-c417...</text><circle cx="3029.0" cy="1005.6" r="5.2" fill="#ADB62E"/><text x="3045.7" y="1010.8" font-size="16.6" fill="#343741" font-weight="400" text-anchor="start" >gke-vseca-lizzie-pool-1-630...</text><circle cx="3029.0" cy="1039.5" r="5.2" fill="#339FA2"/><text x="3045.7" y="1044.7" font-size="16.6" fill="#343741" font-weight="400" text-anchor="start" >kdr-ece3</text><circle cx="3029.0" cy="1073.4" r="5.2" fill="#CC3A26"/><text x="3045.7" y="1078.6" font-size="16.6" fill="#343741" font-weight="400" text-anchor="start" >gke-jddwr-elastic-default-po...</text><circle cx="3029.0" cy="1107.3" r="5.2" fill="#DD772A"/><text x="3045.7" y="1112.5" font-size="16.6" fill="#343741" font-weight="400" text-anchor="start" >gke-jddwr-elastic-default-po...</text><circle cx="3029.0" cy="1141.2" r="5.2" fill="#F7C23F"/><text x="3045.7" y="1146.4" font-size="16.6" fill="#343741" font-weight="400" text-anchor="start" >gke-lil-test-default-pool-c1e...</text><circle cx="3029.0" cy="1175.1" r="5.2" fill="#6E66F0"/><text x="3045.7" y="1180.3" font-size="16.6" fill="#343741" font-weight="400" text-anchor="start" >gke-lil-test-default-pool-c1e...</text><circle cx="3029.0" cy="1209.0" r="5.2" fill="#EB45EE"/><text x="3045.7" y="1214.2" font-size="16.6" fill="#343741" font-weight="400" text-anchor="start" >gke-lil-test-default-pool-c1e...</text><circle cx="3029.0" cy="1242.9" r="5.2" fill="#2B2B2B"/><text x="3045.7" y="1248.1" font-size="16.6" fill="#343741" font-weight="400" text-anchor="start" >gke-jddwr-elastic-pool-3-74...</text><line x1="109.3" y1="1491.8" x2="1334.6" y2="1491.8" stroke="#EEEEEE" stroke-width="1.2"/><line x1="109.3" y1="1517.6" x2="1334.6" y2="1517.6" stroke="#EEEEEE" stroke-width="1.2"/><line x1="109.3" y1="1543.5" x2="1334.6" y2="1543.5" stroke="#EEEEEE" stroke-width="1.2"/><line x1="109.3" y1="1569.3" x2="1334.6" y2="1569.3" stroke="#EEEEEE" stroke-width="1.2"/><line x1="109.3" y1="1595.1" x2="1334.6" y2="1595.1" stroke="#EEEEEE" stroke-width="1.2"/><line x1="109.3" y1="1620.9" x2="1334.6" y2="1620.9" stroke="#EEEEEE" stroke-width="1.2"/><line x1="109.3" y1="1646.8" x2="1334.6" y2="1646.8" stroke="#EEEEEE" stroke-width="1.2"/><line x1="122.3" y1="1474.3" x2="122.3" y2="1712.7" stroke="#DCDCDC" stroke-width="1.2"/><line x1="203.1" y1="1474.3" x2="203.1" y2="1712.7" stroke="#EEEEEE" stroke-width="1.2"/><line x1="283.9" y1="1474.3" x2="283.9" y2="1712.7" stroke="#EEEEEE" stroke-width="1.2"/><line x1="364.8" y1="1474.3" x2="364.8" y2="1712.7" stroke="#EEEEEE" stroke-width="1.2"/><line x1="445.6" y1="1474.3" x2="445.6" y2="1712.7" stroke="#EEEEEE" stroke-width="1.2"/><line x1="526.4" y1="1474.3" x2="526.4" y2="1712.7" stroke="#EEEEEE" stroke-width="1.2"/><line x1="607.2" y1="1474.3" x2="607.2" y2="1712.7" stroke="#EEEEEE" stroke-width="1.2"/><line x1="688.0" y1="1474.3" x2="688.0" y2="1712.7" stroke="#EEEEEE" stroke-width="1.2"/><line x1="768.9" y1="1474.3" x2="768.9" y2="1712.7" stroke="#EEEEEE" stroke-width="1.2"/><line x1="849.7" y1="1474.3" x2="849.7" y2="1712.7" stroke="#EEEEEE" stroke-width="1.2"/><line x1="930.5" y1="1474.3" x2="930.5" y2="1712.7" stroke="#EEEEEE" stroke-width="1.2"/><line x1="1011.3" y1="1474.3" x2="1011.3" y2="1712.7" stroke="#EEEEEE" stroke-width="1.2"/><line x1="1092.1" y1="1474.3" x2="1092.1" y2="1712.7" stroke="#EEEEEE" stroke-width="1.2"/><line x1="1173.0" y1="1474.3" x2="1173.0" y2="1712.7" stroke="#EEEEEE" stroke-width="1.2"/><line x1="1253.8" y1="1474.3" x2="1253.8" y2="1712.7" stroke="#EEEEEE" stroke-width="1.2"/><line x1="1334.6" y1="1474.3" x2="1334.6" y2="1712.7" stroke="#EEEEEE" stroke-width="1.2"/><text x="96.3" y="1496.3" font-size="12.8" fill="#5C5D62" font-weight="400" text-anchor="end" >2.7MB</text><text x="96.3" y="1522.1" font-size="12.8" fill="#5C5D62" font-weight="400" text-anchor="end" >2.5MB</text><text x="96.3" y="1548.0" font-size="12.8" fill="#5C5D62" font-weight="400" text-anchor="end" >2.3MB</text><text x="96.3" y="1573.8" font-size="12.8" fill="#5C5D62" font-weight="400" text-anchor="end" >2.1MB</text><text x="96.3" y="1599.6" font-size="12.8" fill="#5C5D62" font-weight="400" text-anchor="end" >1.9MB</text><text x="96.3" y="1625.4" font-size="12.8" fill="#5C5D62" font-weight="400" text-anchor="end" >1.7MB</text><text x="96.3" y="1651.3" font-size="12.8" fill="#5C5D62" font-weight="400" text-anchor="end" >1.5MB</text><text x="122.3" y="1737.2" font-size="12.6" fill="#5C5D62" font-weight="400" text-anchor="middle" >16:40</text><text x="203.1" y="1737.2" font-size="12.6" fill="#5C5D62" font-weight="400" text-anchor="middle" >16:41</text><text x="283.9" y="1737.2" font-size="12.6" fill="#5C5D62" font-weight="400" text-anchor="middle" >16:42</text><text x="364.8" y="1737.2" font-size="12.6" fill="#5C5D62" font-weight="400" text-anchor="middle" >16:43</text><text x="445.6" y="1737.2" font-size="12.6" fill="#5C5D62" font-weight="400" text-anchor="middle" >16:44</text><text x="526.4" y="1737.2" font-size="12.6" fill="#5C5D62" font-weight="400" text-anchor="middle" >16:45</text><text x="607.2" y="1737.2" font-size="12.6" fill="#5C5D62" font-weight="400" text-anchor="middle" >16:46</text><text x="688.0" y="1737.2" font-size="12.6" fill="#5C5D62" font-weight="400" text-anchor="middle" >16:47</text><text x="768.9" y="1737.2" font-size="12.6" fill="#5C5D62" font-weight="400" text-anchor="middle" >16:48</text><text x="849.7" y="1737.2" font-size="12.6" fill="#5C5D62" font-weight="400" text-anchor="middle" >16:49</text><text x="930.5" y="1737.2" font-size="12.6" fill="#5C5D62" font-weight="400" text-anchor="middle" >16:50</text><text x="1011.3" y="1737.2" font-size="12.6" fill="#5C5D62" font-weight="400" text-anchor="middle" >16:51</text><text x="1092.1" y="1737.2" font-size="12.6" fill="#5C5D62" font-weight="400" text-anchor="middle" >16:52</text><text x="1173.0" y="1737.2" font-size="12.6" fill="#5C5D62" font-weight="400" text-anchor="middle" >16:53</text><text x="1253.8" y="1737.2" font-size="12.6" fill="#5C5D62" font-weight="400" text-anchor="middle" >16:54</text><text x="1334.6" y="1737.2" font-size="12.6" fill="#5C5D62" font-weight="400" text-anchor="middle" >16:55</text><text x="728.4" y="1762.5" font-size="15.3" fill="#000" font-weight="700" text-anchor="middle" >per 5 minutes</text><circle cx="930.4" cy="1474.3" r="2.3" fill="#fff" stroke="#339FA2" stroke-width="2.2"/><circle cx="1376.5" cy="1484.8" r="5.2" fill="#6FB62E"/><text x="1393.0" y="1490.0" font-size="16.6" fill="#343741" font-weight="400" text-anchor="start" >gke-vseca-lizzie-pool-1-1877...</text><circle cx="1376.5" cy="1518.7" r="5.2" fill="#2A9CDD"/><text x="1393.0" y="1523.9" font-size="16.6" fill="#343741" font-weight="400" text-anchor="start" >gke-vseca-lizzie-pool-1-c417...</text><circle cx="1376.5" cy="1552.6" r="5.2" fill="#ADB62E"/><text x="1393.0" y="1557.8" font-size="16.6" fill="#343741" font-weight="400" text-anchor="start" >gke-vseca-lizzie-pool-1-630...</text><circle cx="1376.5" cy="1586.5" r="5.2" fill="#339FA2"/><text x="1393.0" y="1591.7" font-size="16.6" fill="#343741" font-weight="400" text-anchor="start" >kdr-ece3</text><circle cx="1376.5" cy="1620.4" r="5.2" fill="#CC3A26"/><text x="1393.0" y="1625.6" font-size="16.6" fill="#343741" font-weight="400" text-anchor="start" >gke-jddwr-elastic-default-po...</text><circle cx="1376.5" cy="1654.3" r="5.2" fill="#DD772A"/><text x="1393.0" y="1659.5" font-size="16.6" fill="#343741" font-weight="400" text-anchor="start" >gke-jddwr-elastic-default-po...</text><line x1="1762.0" y1="1492.6" x2="2986.9" y2="1492.6" stroke="#EEEEEE" stroke-width="1.2"/><line x1="1762.0" y1="1522.2" x2="2986.9" y2="1522.2" stroke="#EEEEEE" stroke-width="1.2"/><line x1="1762.0" y1="1551.8" x2="2986.9" y2="1551.8" stroke="#EEEEEE" stroke-width="1.2"/><line x1="1762.0" y1="1581.4" x2="2986.9" y2="1581.4" stroke="#EEEEEE" stroke-width="1.2"/><line x1="1762.0" y1="1611.0" x2="2986.9" y2="1611.0" stroke="#EEEEEE" stroke-width="1.2"/><line x1="1762.0" y1="1640.6" x2="2986.9" y2="1640.6" stroke="#EEEEEE" stroke-width="1.2"/><line x1="1775.0" y1="1474.6" x2="1775.0" y2="1712.7" stroke="#DCDCDC" stroke-width="1.2"/><line x1="1855.8" y1="1474.6" x2="1855.8" y2="1712.7" stroke="#EEEEEE" stroke-width="1.2"/><line x1="1936.6" y1="1474.6" x2="1936.6" y2="1712.7" stroke="#EEEEEE" stroke-width="1.2"/><line x1="2017.4" y1="1474.6" x2="2017.4" y2="1712.7" stroke="#EEEEEE" stroke-width="1.2"/><line x1="2098.2" y1="1474.6" x2="2098.2" y2="1712.7" stroke="#EEEEEE" stroke-width="1.2"/><line x1="2179.0" y1="1474.6" x2="2179.0" y2="1712.7" stroke="#EEEEEE" stroke-width="1.2"/><line x1="2259.8" y1="1474.6" x2="2259.8" y2="1712.7" stroke="#EEEEEE" stroke-width="1.2"/><line x1="2340.6" y1="1474.6" x2="2340.6" y2="1712.7" stroke="#EEEEEE" stroke-width="1.2"/><line x1="2421.3" y1="1474.6" x2="2421.3" y2="1712.7" stroke="#EEEEEE" stroke-width="1.2"/><line x1="2502.1" y1="1474.6" x2="2502.1" y2="1712.7" stroke="#EEEEEE" stroke-width="1.2"/><line x1="2582.9" y1="1474.6" x2="2582.9" y2="1712.7" stroke="#EEEEEE" stroke-width="1.2"/><line x1="2663.7" y1="1474.6" x2="2663.7" y2="1712.7" stroke="#EEEEEE" stroke-width="1.2"/><line x1="2744.5" y1="1474.6" x2="2744.5" y2="1712.7" stroke="#EEEEEE" stroke-width="1.2"/><line x1="2825.3" y1="1474.6" x2="2825.3" y2="1712.7" stroke="#EEEEEE" stroke-width="1.2"/><line x1="2906.1" y1="1474.6" x2="2906.1" y2="1712.7" stroke="#EEEEEE" stroke-width="1.2"/><line x1="2986.9" y1="1474.6" x2="2986.9" y2="1712.7" stroke="#EEEEEE" stroke-width="1.2"/><text x="1749.0" y="1497.1" font-size="12.8" fill="#5C5D62" font-weight="400" text-anchor="end" >5.7MB</text><text x="1749.0" y="1526.7" font-size="12.8" fill="#5C5D62" font-weight="400" text-anchor="end" >5.2MB</text><text x="1749.0" y="1556.3" font-size="12.8" fill="#5C5D62" font-weight="400" text-anchor="end" >4.8MB</text><text x="1749.0" y="1585.9" font-size="12.8" fill="#5C5D62" font-weight="400" text-anchor="end" >4.3MB</text><text x="1749.0" y="1615.5" font-size="12.8" fill="#5C5D62" font-weight="400" text-anchor="end" >3.8MB</text><text x="1749.0" y="1645.1" font-size="12.8" fill="#5C5D62" font-weight="400" text-anchor="end" >3.3MB</text><text x="1775.0" y="1737.2" font-size="12.6" fill="#5C5D62" font-weight="400" text-anchor="middle" >16:40</text><text x="1855.8" y="1737.2" font-size="12.6" fill="#5C5D62" font-weight="400" text-anchor="middle" >16:41</text><text x="1936.6" y="1737.2" font-size="12.6" fill="#5C5D62" font-weight="400" text-anchor="middle" >16:42</text><text x="2017.4" y="1737.2" font-size="12.6" fill="#5C5D62" font-weight="400" text-anchor="middle" >16:43</text><text x="2098.2" y="1737.2" font-size="12.6" fill="#5C5D62" font-weight="400" text-anchor="middle" >16:44</text><text x="2179.0" y="1737.2" font-size="12.6" fill="#5C5D62" font-weight="400" text-anchor="middle" >16:45</text><text x="2259.8" y="1737.2" font-size="12.6" fill="#5C5D62" font-weight="400" text-anchor="middle" >16:46</text><text x="2340.6" y="1737.2" font-size="12.6" fill="#5C5D62" font-weight="400" text-anchor="middle" >16:47</text><text x="2421.3" y="1737.2" font-size="12.6" fill="#5C5D62" font-weight="400" text-anchor="middle" >16:48</text><text x="2502.1" y="1737.2" font-size="12.6" fill="#5C5D62" font-weight="400" text-anchor="middle" >16:49</text><text x="2582.9" y="1737.2" font-size="12.6" fill="#5C5D62" font-weight="400" text-anchor="middle" >16:50</text><text x="2663.7" y="1737.2" font-size="12.6" fill="#5C5D62" font-weight="400" text-anchor="middle" >16:51</text><text x="2744.5" y="1737.2" font-size="12.6" fill="#5C5D62" font-weight="400" text-anchor="middle" >16:52</text><text x="2825.3" y="1737.2" font-size="12.6" fill="#5C5D62" font-weight="400" text-anchor="middle" >16:53</text><text x="2906.1" y="1737.2" font-size="12.6" fill="#5C5D62" font-weight="400" text-anchor="middle" >16:54</text><text x="2986.9" y="1737.2" font-size="12.6" fill="#5C5D62" font-weight="400" text-anchor="middle" >16:55</text><text x="2380.9" y="1762.5" font-size="15.3" fill="#000" font-weight="700" text-anchor="middle" >per 5 minutes</text><circle cx="2582.7" cy="1474.6" r="2.3" fill="#fff" stroke="#339FA2" stroke-width="2.2"/><circle cx="3028.5" cy="1484.8" r="5.2" fill="#6FB62E"/><text x="3045.9" y="1490.0" font-size="16.6" fill="#343741" font-weight="400" text-anchor="start" >gke-vseca-lizzie-pool-1-1877...</text><circle cx="3028.5" cy="1518.7" r="5.2" fill="#2A9CDD"/><text x="3045.9" y="1523.9" font-size="16.6" fill="#343741" font-weight="400" text-anchor="start" >gke-vseca-lizzie-pool-1-c417...</text><circle cx="3028.5" cy="1552.6" r="5.2" fill="#ADB62E"/><text x="3045.9" y="1557.8" font-size="16.6" fill="#343741" font-weight="400" text-anchor="start" >gke-vseca-lizzie-pool-1-630...</text><circle cx="3028.5" cy="1586.5" r="5.2" fill="#339FA2"/><text x="3045.9" y="1591.7" font-size="16.6" fill="#343741" font-weight="400" text-anchor="start" >kdr-ece3</text><circle cx="3028.5" cy="1620.4" r="5.2" fill="#CC3A26"/><text x="3045.9" y="1625.6" font-size="16.6" fill="#343741" font-weight="400" text-anchor="start" >gke-jddwr-elastic-default-po...</text><circle cx="3028.5" cy="1654.3" r="5.2" fill="#DD772A"/><text x="3045.9" y="1659.5" font-size="16.6" fill="#343741" font-weight="400" text-anchor="start" >gke-jddwr-elastic-default-po...</text>
</svg>
<div style="position:absolute;left:0;top:1560px;width:3307px;height:89px;overflow:hidden;"><div style="position:absolute;left:800px;top:100px;width:1680px;height:60px;border-radius:30px;box-shadow:0 0 45px 12px rgba(0,0,0,.085);background:rgba(0,0,0,.08);"></div></div>
</body></html>
